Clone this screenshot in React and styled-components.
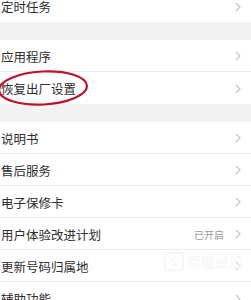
import React from 'react';
import styled, { createGlobalStyle } from 'styled-components';

const GlobalStyle = createGlobalStyle`
    html, body {
        margin: 0;
        padding: 0;
        background: #ffffff;
        overflow: hidden;
    }
    body {
        font-family: "Noto Sans CJK SC", "Noto Sans", sans-serif;
    }
`

const Page = styled.div`
    position: relative;
    width: 251px;
    height: 300px;
    overflow: hidden;
    background: #ffffff;
`

const List = styled.div`
    display: flex;
    flex-direction: column;
    margin-top: -10px;
`

const Group = styled.div`
    display: flex;
    flex-direction: column;
    background: #ffffff;
`

const Gap = styled.div`
    height: 18px;
    background: #f2f2f2;
`

const Row = styled.div`
    box-sizing: border-box;
    height: 32px;
    display: flex;
    align-items: center;
    padding: 1px 10px 0 1px;
    border-bottom: ${p => (p.$last ? 'none' : '1px solid #ececec')};
`

const Label = styled.span`
    flex: 1;
    font-size: 12.5px;
    color: #2e2e2e;
`

const Value = styled.span`
    font-size: 10px;
    color: #9a9a9a;
    margin-right: 11px;
`

const Chevron = () => (
    <svg width="6" height="10" viewBox="0 0 6 10">
        <polyline points="1,1 5,5 1,9" fill="none" stroke="#c4c4c4" strokeWidth="1.2" />
    </svg>
)

const Circle = styled.svg`
    position: absolute;
    left: -4px;
    top: 69px;
    pointer-events: none;
`

const Watermark = styled.div`
    position: absolute;
    left: 164px;
    top: 251px;
    display: flex;
    align-items: center;
    gap: 3px;
    font-size: 14px;
    font-weight: bold;
    color: #f8f8f8;
    pointer-events: none;
`

const Badge = styled.span`
    display: inline-flex;
    align-items: center;
    justify-content: center;
    width: 16px;
    height: 15px;
    border: 2px solid #f6f6f6;
    border-radius: 4px;
    font-size: 11px;
`

const groups = [
    [{ label: '定时任务' }],
    [{ label: '应用程序' }, { label: '恢复出厂设置' }],
    [
        { label: '说明书' },
        { label: '售后服务' },
        { label: '电子保修卡' },
        { label: '用户体验改进计划', value: '已开启' },
        { label: '更新号码归属地' },
        { label: '辅助功能' },
    ],
]

const App = () => {
    return (<Page>
        <GlobalStyle />
        <List>
            {groups.map((items, gi) => (
                <React.Fragment key={gi}>
                    {gi > 0 && <Gap />}
                    <Group>
                        {items.map((item, i) => (
                            <Row key={item.label} $last={i === items.length - 1}>
                                <Label>{item.label}</Label>
                                {item.value && <Value>{item.value}</Value>}
                                <Chevron />
                            </Row>
                        ))}
                    </Group>
                </React.Fragment>
            ))}
        </List>
        <Watermark>
            <Badge>S</Badge>
            <span>百度经验</span>
        </Watermark>
        <Circle width="94" height="38" viewBox="0 0 94 38">
            <ellipse cx="47" cy="19" rx="44" ry="16.5" fill="none" stroke="#c0102b" strokeWidth="2.2" transform="rotate(-3 47 19)" />
        </Circle>
    </Page>);
}

export default App;
